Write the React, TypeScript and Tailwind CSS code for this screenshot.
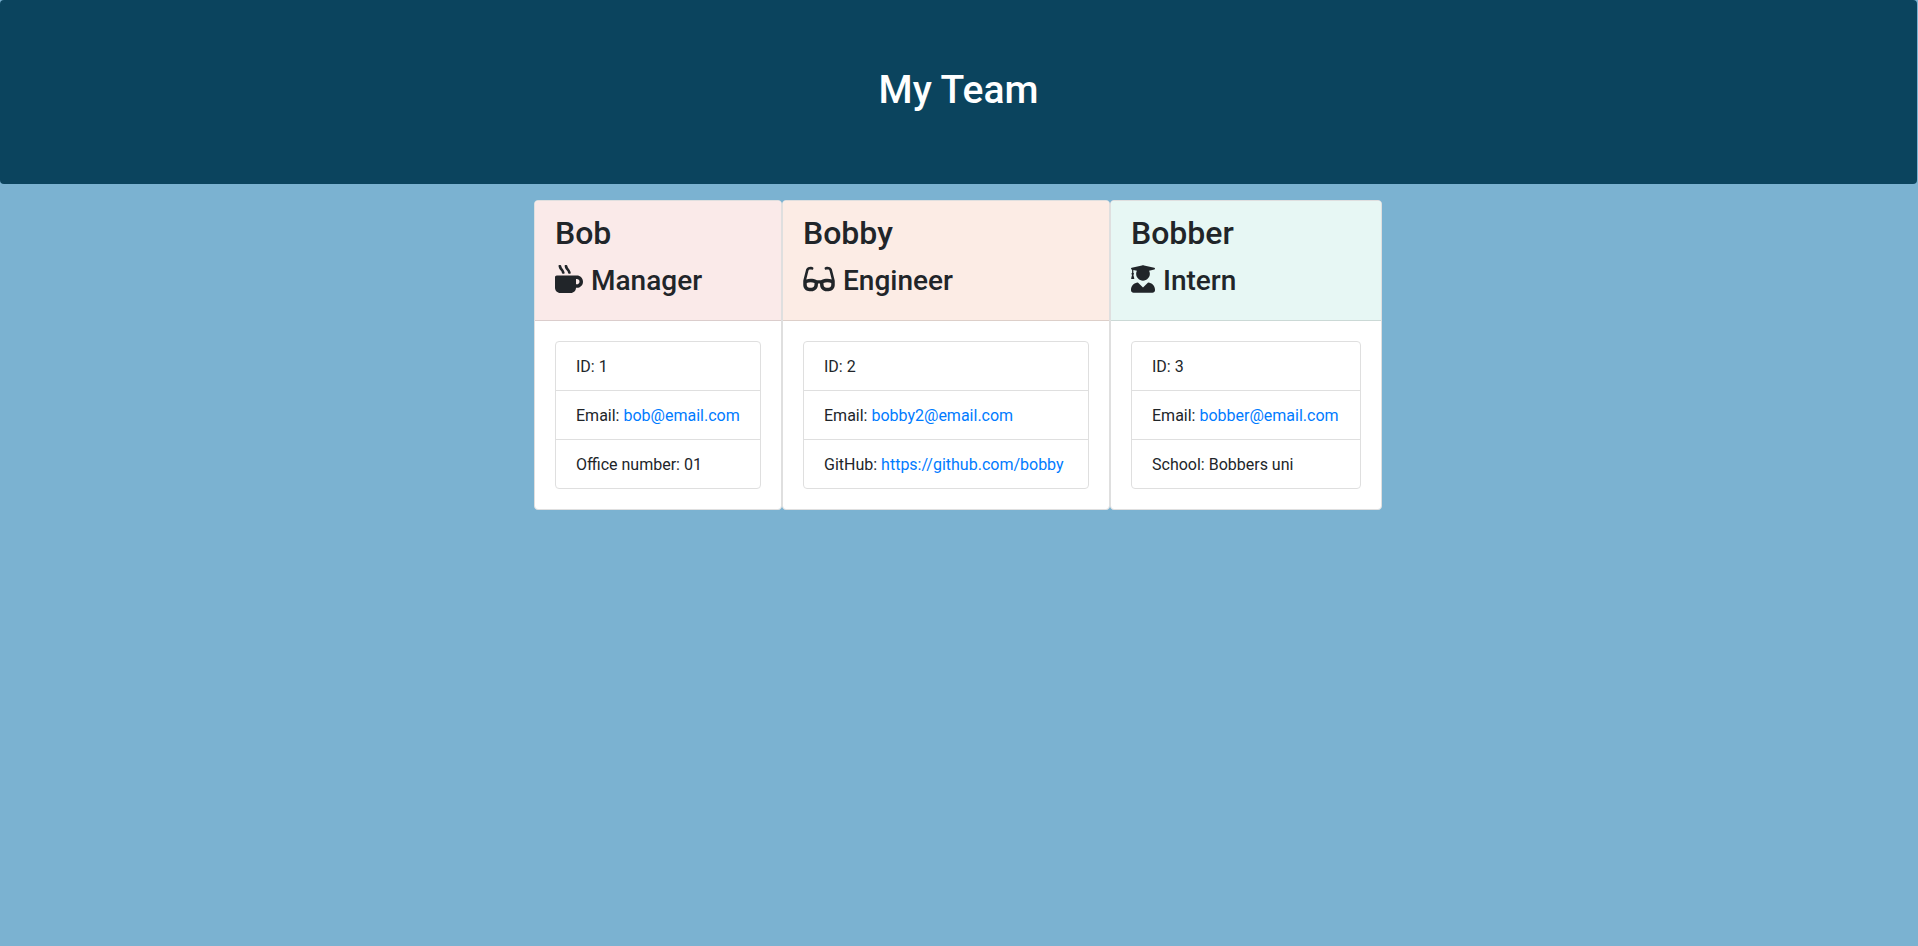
import type { ReactNode } from 'react';
import { FaGlasses, FaMugHot, FaUserGraduate } from 'react-icons/fa';

type CardProps = {
  name: string;
  role: string;
  icon: ReactNode;
  tint: string;
  width: string;
  children: ReactNode;
};

function Card({ name, role, icon, tint, width, children }: CardProps) {
  return (
    <article className={`${width} overflow-hidden rounded border border-[#dfdfdf] bg-white`}>
      <header className={`${tint} border-b border-black/12 px-5 pt-3 pb-5`}>
        <h2 className="mb-2 text-[32px] leading-10 font-medium">{name}</h2>
        <h3 className="flex items-start gap-2 text-[28px] leading-[39px] font-medium">
          {icon}
          {role}
        </h3>
      </header>
      <div className="p-5">
        <ul className="divide-y divide-[#dfdfdf] rounded border border-[#dfdfdf]">{children}</ul>
      </div>
    </article>
  );
}

function Item({ children }: { children: ReactNode }) {
  return <li className="px-5 pt-[13px] pb-[11px] whitespace-nowrap">{children}</li>;
}

function Link({ href, children }: { href: string; children: ReactNode }) {
  return (
    <a href={href} className="text-[#007bff] hover:underline">
      {children}
    </a>
  );
}

export default function App() {
  return (
    <div className="min-h-screen bg-[#7bb2d1] pr-px font-['Roboto',sans-serif] text-base leading-6 text-[#212529]">
      <header className="mb-4 rounded bg-[#0b445e] px-8 pt-16 pb-[68px] text-center text-white">
        <h1 className="text-[39px] leading-[52px] font-medium">My Team</h1>
      </header>
      <main className="flex flex-wrap justify-center pr-px">
        <Card
          name="Bob"
          role="Manager"
          tint="bg-[#faeae9]"
          width="w-[248px]"
          icon={<FaMugHot aria-hidden="true" className="mt-1 h-7 w-7" />}
        >
          <Item>ID: 1</Item>
          <Item>
            Email: <Link href="mailto:bob@email.com">bob@email.com</Link>
          </Item>
          <Item>Office number: 01</Item>
        </Card>
        <Card
          name="Bobby"
          role="Engineer"
          tint="bg-[#fcece5]"
          width="w-[328px]"
          icon={<FaGlasses aria-hidden="true" className="mt-1 h-7 w-8" />}
        >
          <Item>ID: 2</Item>
          <Item>
            Email: <Link href="mailto:bobby2@email.com">bobby2@email.com</Link>
          </Item>
          <Item>
            GitHub: <Link href="https://github.com/bobby">https://github.com/bobby</Link>
          </Item>
        </Card>
        <Card
          name="Bobber"
          role="Intern"
          tint="bg-[#e7f7f4]"
          width="w-[272px]"
          icon={<FaUserGraduate aria-hidden="true" className="mt-1 h-7 w-6" />}
        >
          <Item>ID: 3</Item>
          <Item>
            Email: <Link href="mailto:bobber@email.com">bobber@email.com</Link>
          </Item>
          <Item>School: Bobbers uni</Item>
        </Card>
      </main>
    </div>
  );
}
